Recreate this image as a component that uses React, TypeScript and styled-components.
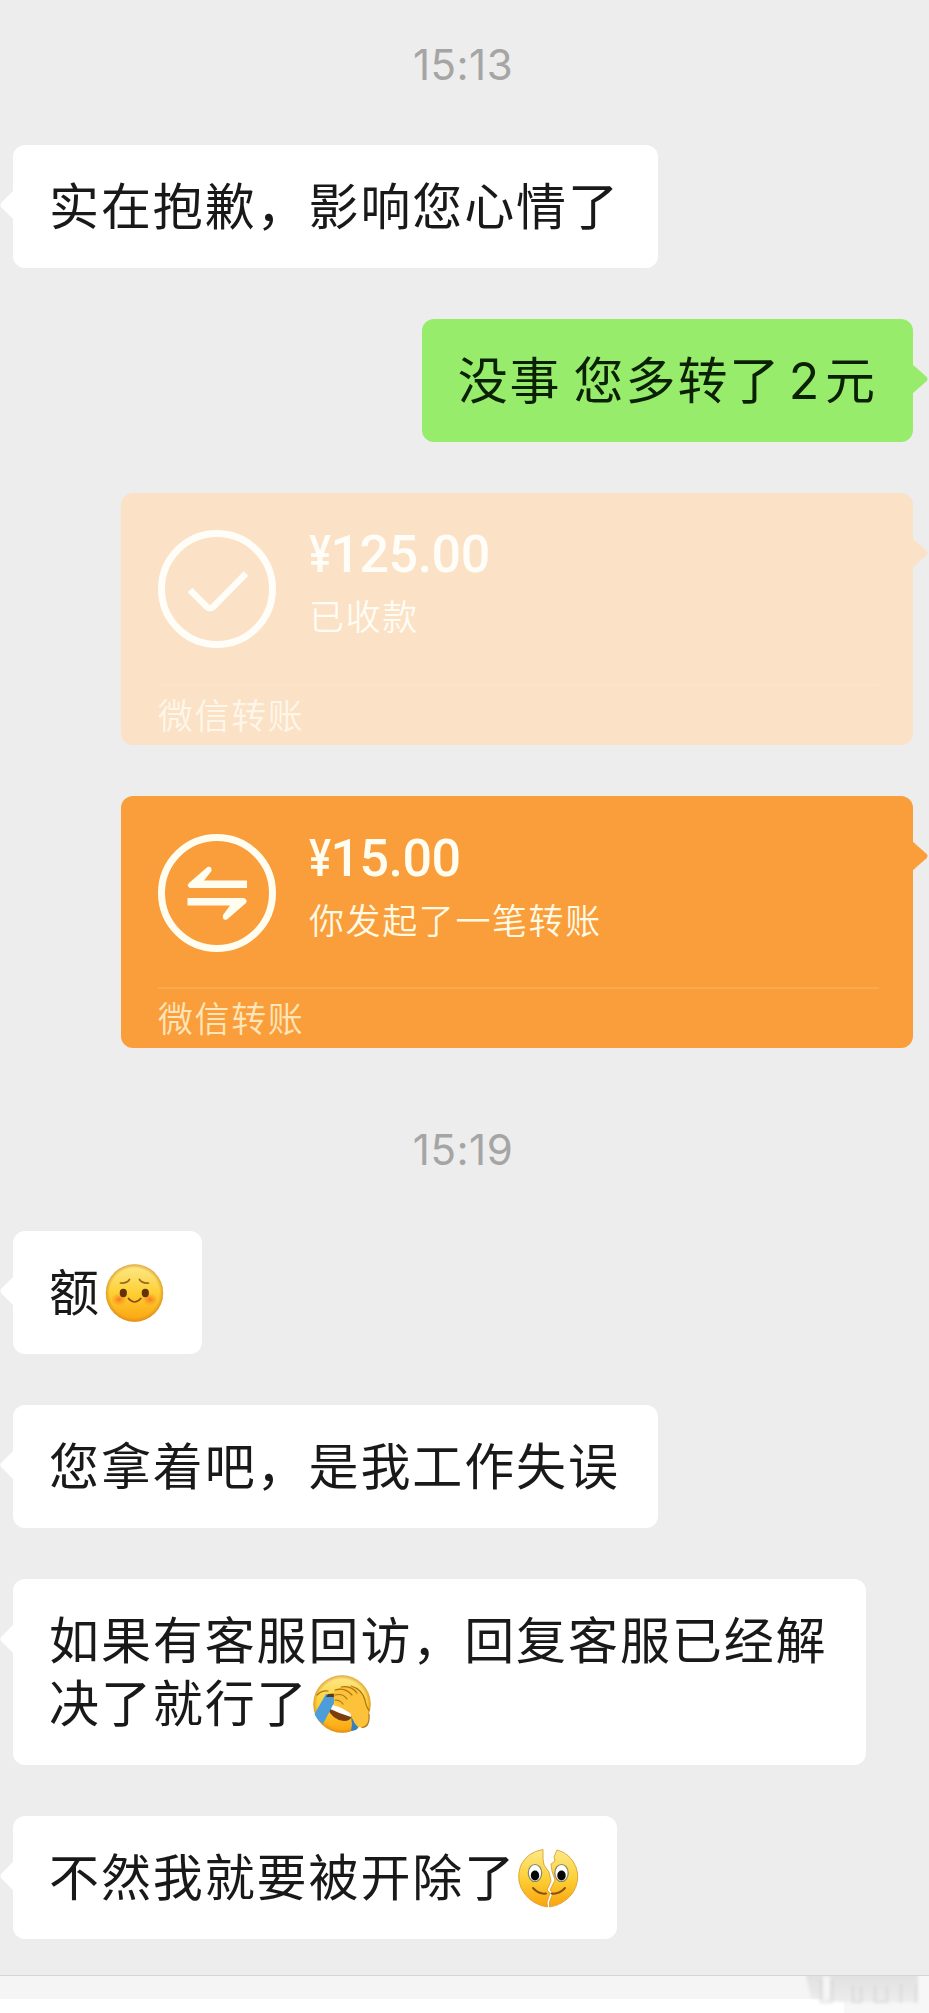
import React from 'react';
import styled, { createGlobalStyle } from 'styled-components';

const Global = createGlobalStyle`
  * { box-sizing: border-box; }
  body { margin: 0; background: #ededed; }
`;

const Screen = styled.main`
  width: 929px;
  height: 2013px;
  overflow: hidden;
  display: flex;
  flex-direction: column;
  background: #ededed;
  font-family: 'Noto Sans CJK SC', sans-serif;
`;

const Thread = styled.section`
  flex: 1;
  display: flex;
  flex-direction: column;
  gap: 51px;
  padding: 0 16px 0 13px;
`;

const Time = styled.time<{ $first?: boolean }>`
  display: block;
  flex: none;
  height: ${p => (p.$first ? 94 : 81)}px;
  padding-top: ${p => (p.$first ? 40 : 26)}px;
  text-align: center;
  font: 400 42px/50px Inter, sans-serif;
  letter-spacing: 0.5px;
  color: #a5a5a5;
`;

const Bubble = styled.div<{ $mine?: boolean }>`
  position: relative;
  flex: none;
  align-self: ${p => (p.$mine ? 'flex-end' : 'flex-start')};
  padding: 27px ${p => (p.$mine ? 36 : 38)}px 33.4px 36px;
  border-radius: 12px;
  background: ${p => (p.$mine ? '#98ec6b' : '#fff')};
  color: ${p => (p.$mine ? '#0a2103' : '#191919')};
  font-size: 50px;
  line-height: 62.6px;
  letter-spacing: 1.9px;
  word-spacing: -1px;
  white-space: nowrap;
`;

const Digit = styled.span`
  font: 400 50px/50px Inter, sans-serif;
  margin: 0 4px 0 7.5px;
`;

const TailSvg = styled.svg<{ $right?: boolean }>`
  position: absolute;
  top: 44px;
  ${p => (p.$right ? 'right: -15px;' : 'left: -13px;')}
  ${p => (p.$right ? '' : 'transform: scaleX(-1);')}
`;

const Tail = ({ color, right }: { color: string; right?: boolean }) => (
  <TailSvg $right={right} width={right ? 16 : 14} height="32" viewBox="0 0 16 32" preserveAspectRatio="none">
    <path d="M0 1 L14.5 13.8 Q16.5 16 14.5 18.2 L0 31Z" fill={color} />
  </TailSvg>
);

const Card = styled.article<{ $faded?: boolean }>`
  position: relative;
  flex: none;
  align-self: flex-end;
  width: 792px;
  height: 252px;
  padding: ${p => (p.$faded ? 37 : 38)}px 34px 0 37px;
  border-radius: 12px;
  background: ${p => (p.$faded ? '#fbe1c5' : '#fa9e3b')};
  color: ${p => (p.$faded ? '#fffdf8' : '#fffdf0')};
`;

const CardTop = styled.div<{ $faded?: boolean }>`
  display: flex;
  gap: 33px;
  height: ${p => (p.$faded ? 156 : 155)}px;
  border-bottom: 2px solid ${p => (p.$faded ? '#fce4cb' : '#fba84e')};
`;

const CardText = styled.div`
  display: flex;
  flex-direction: column;
`;

const Amount = styled.strong`
  font: 500 52px/60px Roboto, sans-serif;
  letter-spacing: -0.5px;
  margin-top: -5px;
`;

const Currency = styled.span`
  display: inline-block;
  width: 22px;
  margin-right: -0.5px;
  transform: scaleX(0.8);
  transform-origin: left;
`;

const Status = styled.span<{ $faded?: boolean }>`
  font-size: 35px;
  font-weight: 350;
  line-height: 46px;
  letter-spacing: 1.6px;
  margin-top: 7px;
  color: ${p => (p.$faded ? '#fffcf4' : '#fffae6')};
`;

const Source = styled.div<{ $faded?: boolean }>`
  font-size: 35px;
  font-weight: 350;
  line-height: 46px;
  letter-spacing: 1.6px;
  padding-top: 5px;
  color: ${p => (p.$faded ? '#fff6ea' : '#fee5ba')};
`;

const StatusIcon = ({ done }: { done?: boolean }) => (
  <svg width="118" height="118" viewBox="0 0 118 118" fill="none">
    <circle cx="59" cy="59" r="55.5" stroke="currentColor" strokeWidth="7" />
    {done ? (
      <path d="M32 60 L49 77 Q52 79.5 55 77 L88 43.5" stroke="currentColor" strokeWidth="6.5" />
    ) : (
      <g fill="currentColor">
        <path d="M89 46.5V54H32Q28 52 31 49L49.5 33Q54 32 53.5 37L46 46.5Z" />
        <path d="M29.500 64H86Q90 66 88 69L69 85.500Q64 87 65 81L72 71.500H29.500Z" />
      </g>
    )}
  </svg>
);

const EmojiSvg = styled.svg`
  display: inline-block;
  width: 64px;
  height: 62px;
  margin: -16px -1px -16px 0;
  vertical-align: 2.5px;
`;

const Gold = ({ id }: { id: string }) => (
  <defs>
    <linearGradient id={id} x1="0" y1="0" x2="0" y2="1">
      <stop offset="0" stopColor="#fce98b" />
      <stop offset=".5" stopColor="#fdd035" />
      <stop offset="1" stopColor="#fba310" />
    </linearGradient>
    <radialGradient id={id + 'rim'}>
      <stop offset=".86" stopColor="#d98a18" stopOpacity="0" />
      <stop offset="1" stopColor="#cd8420" stopOpacity=".65" />
    </radialGradient>
    <radialGradient id={id + 'blush'}>
      <stop offset="0" stopColor="#fa6a20" stopOpacity=".85" />
      <stop offset="1" stopColor="#fb8a20" stopOpacity="0" />
    </radialGradient>
  </defs>
);

const ShyFace = () => (
  <EmojiSvg viewBox="0 0 64 62" role="img">
    <Gold id="shy" />
    <circle cx="33.500" cy="31" r="28.700" fill="url(#shy)" />
    <circle cx="33.500" cy="31" r="28.700" fill="url(#shyrim)" />
    <ellipse cx="18" cy="37.500" rx="8" ry="6.500" fill="url(#shyblush)" />
    <ellipse cx="49" cy="37.500" rx="8" ry="6.500" fill="url(#shyblush)" />
    <ellipse cx="22.300" cy="31" rx="3.600" ry="4.200" fill="#643207" />
    <ellipse cx="44.300" cy="31" rx="3.600" ry="4.200" fill="#643207" />
    <g fill="none" stroke="#9a681c" strokeWidth="1.700" strokeLinecap="round">
      <path d="M19.500 21 Q26 21.500 28.500 17.500" />
      <path d="M38.500 17.500 Q41 21.500 47.500 21" />
      <path d="M27.500 36.500 Q33.500 43.500 39.800 36.500" stroke="#85500f" />
    </g>
  </EmojiSvg>
);

const FacepalmFace = () => (
  <EmojiSvg viewBox="0 0 64 62" role="img">
    <Gold id="palm" />
    <circle cx="33" cy="31" r="28.700" fill="url(#palm)" />
    <circle cx="33" cy="31" r="28.700" fill="url(#palmrim)" />
    <path d="M18 32 Q30 34 43 42 Q42 48 35 48 Q23 47 18 34Z" fill="#7b3d0b" />
    <path d="M18 31.500 Q31 32 43 41 L42 44 Q29 40 19 35Z" fill="#fff" />
    <path d="M17 21 Q22 22 25.500 21 L25 30 L14 51 Q8 47 5.500 41Z" fill="#4c9edb" />
    <path d="M19 21 L26 20.500 L25 24 L17 24Z" fill="#5d3b13" />
    <path d="M42 44 L47 51 L49 55 L47 57 L42 58 L43 51Z" fill="#347fbe" />
    <path d="M25 23 Q23 17 31 15 Q36 11 43 14 Q53 16 57 27 L60 44 Q60 54 53 54.500 Q46 54 44 46 L41 40 Q34 36 27 31 Q24 28 25 25Z" fill="#fec23a" />
    <g fill="none" stroke="#a97419" strokeWidth="1.200" strokeLinecap="round">
      <path d="M26 17 Q36 14 43 22" />
      <path d="M26 22 Q34 20 38 26" />
      <path d="M26 27 Q31 27 34 31" />
      <path d="M32 14 Q42 12 48 20" />
      <path d="M42 13 Q53 16 56 27 Q57 34 60 37" />
      <path d="M8 22 Q13 17 19 18" />
      <path d="M60 41 Q61 54 53 54.500" />
    </g>
  </EmojiSvg>
);

const SplitFace = () => (
  <EmojiSvg viewBox="0 0 64 62" role="img">
    <Gold id="split" />
    <path d="M27 2.500 Q11 5 4.500 19 Q-1 35 9.500 48 Q18 58 31.500 60 L31 55 L34 46 L31 43 L35 34 L33 25 L28 18 L27 12Z" fill="url(#split)" stroke="#dda034" strokeWidth=".9" />
    <path d="M41 3 Q54 6 60 20 Q65 34 56 47 Q47 58 33.500 60 L33.500 55 L37 46 L34 43 L39 33 L36 24 L35 17 L39 14 L38 10Z" fill="url(#split)" stroke="#dda034" strokeWidth=".9" />
    <g fill="#fff" stroke="#85866a" strokeWidth="1.200">
      <ellipse cx="19" cy="26" rx="6.700" ry="8.500" />
      <ellipse cx="45.500" cy="26" rx="6.700" ry="8.500" />
    </g>
    <ellipse cx="19" cy="28.500" rx="4.200" ry="5" fill="#050505" />
    <ellipse cx="45.500" cy="28.500" rx="4.200" ry="5" fill="#050505" />
    <g fill="none" stroke="#83520f" strokeWidth="2" strokeLinecap="round">
      <path d="M17 41 Q23 47.500 30 46.500" />
      <path d="M35.500 46.500 Q43 47.500 49 41" />
    </g>
  </EmojiSvg>
);

const BottomBar = styled.footer`
  flex: none;
  height: 38px;
  display: flex;
  justify-content: flex-end;
  border-top: 1px solid #d5d5d5;
  background: linear-gradient(#f5f5f5 0 23px, #fff 23px);
`;

const BarSmudge = () => (
  <svg width="128" height="37" viewBox="0 0 128 37">
    <defs>
      <linearGradient id="smudge" x2="0" y2="1">
        <stop offset="0" stopColor="#dfdfdf" />
        <stop offset="1" stopColor="#ececec" />
      </linearGradient>
      <filter id="soften"><feGaussianBlur stdDeviation="1.8" /></filter>
    </defs>
    <path d="M43 0H128V37H43Z" fill="#f7f7f7" />
    <g filter="url(#soften)">
      <path d="M4 -5H117V26H40L10 22Z" fill="url(#smudge)" />
      <path d="M20 4V26H31V4M52 10V26H60V10M74 10V26H86V10M100 8V27M115 8V27" fill="none" stroke="#cfcfcf" strokeOpacity=".5" strokeWidth="2.500" />
      <path d="M22 0H29V23H22Z" fill="#f5f5f5" />
    </g>
  </svg>
);

export default function App() {
  return (
    <>
      <Global />
      <Screen>
        <Thread>
          <Time $first>15:13</Time>
          <Bubble><Tail color="#fff" />实在抱歉，影响您心情了</Bubble>
          <Bubble $mine><Tail color="#98ec6b" right />没事 您多转了<Digit>2</Digit>元</Bubble>
          <Card $faded>
            <Tail color="#fbe1c5" right />
            <CardTop $faded>
              <StatusIcon done />
              <CardText>
                <Amount><Currency>¥</Currency>125.00</Amount>
                <Status $faded>已收款</Status>
              </CardText>
            </CardTop>
            <Source $faded>微信转账</Source>
          </Card>
          <Card>
            <Tail color="#fa9e3b" right />
            <CardTop>
              <StatusIcon />
              <CardText>
                <Amount><Currency>¥</Currency>15.00</Amount>
                <Status>你发起了一笔转账</Status>
              </CardText>
            </CardTop>
            <Source>微信转账</Source>
          </Card>
          <Time>15:19</Time>
          <Bubble><Tail color="#fff" />额<ShyFace /></Bubble>
          <Bubble><Tail color="#fff" />您拿着吧，是我工作失误</Bubble>
          <Bubble><Tail color="#fff" />如果有客服回访，回复客服已经解<br />决了就行了<FacepalmFace /></Bubble>
          <Bubble><Tail color="#fff" />不然我就要被开除了<SplitFace /></Bubble>
        </Thread>
        <BottomBar><BarSmudge /></BottomBar>
      </Screen>
    </>
  );
}
